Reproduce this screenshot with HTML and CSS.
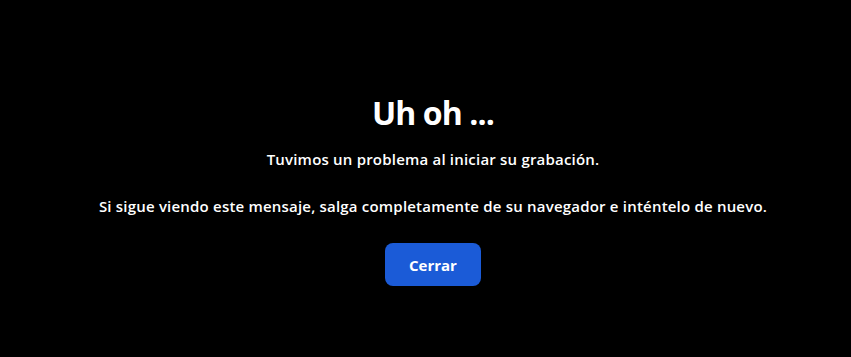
FILE: index.html
```html
<!DOCTYPE html>
<html lang="es">
<head>
<meta charset="utf-8">
<link rel="stylesheet" href="styles.css">
</head>
<body>
<main class="page">
  <section class="dialog">
    <h1 class="title">Uh oh ...</h1>
    <p class="msg">Tuvimos un problema al iniciar su grabación.</p>
    <p class="msg">Si sigue viendo este mensaje, salga completamente de su navegador e inténtelo de nuevo.</p>
    <button class="btn">Cerrar</button>
  </section>
</main>
</body>
</html>
```
FILE: styles.css
```css
html, body {
  margin: 0;
  padding: 0;
  background: #000;
  height: 100%;
}
.page {
  height: 357px;
  display: flex;
  justify-content: center;
  padding-left: 15px;
  box-sizing: border-box;
  font-family: "Open Sans", sans-serif;
  color: #fff;
}
.dialog {
  display: flex;
  flex-direction: column;
  align-items: center;
  padding-top: 91px;
}
.title {
  margin: 0;
  font-size: 32px;
  font-weight: 700;
  line-height: 44px;
  letter-spacing: -0.9px;
}
.msg {
  margin: 0;
  font-size: 15px;
  font-weight: 600;
  line-height: 20px;
  letter-spacing: 0.2px;
  margin-top: 14px;
}
.msg + .msg {
  margin-top: 27px;
}
.btn {
  margin-top: 27px;
  width: 96px;
  height: 43px;
  border: none;
  border-radius: 8px;
  background: #1b5bd7;
  color: #fff;
  font-family: "Open Sans", sans-serif;
  font-weight: 700;
  font-size: 15px;
}
```
